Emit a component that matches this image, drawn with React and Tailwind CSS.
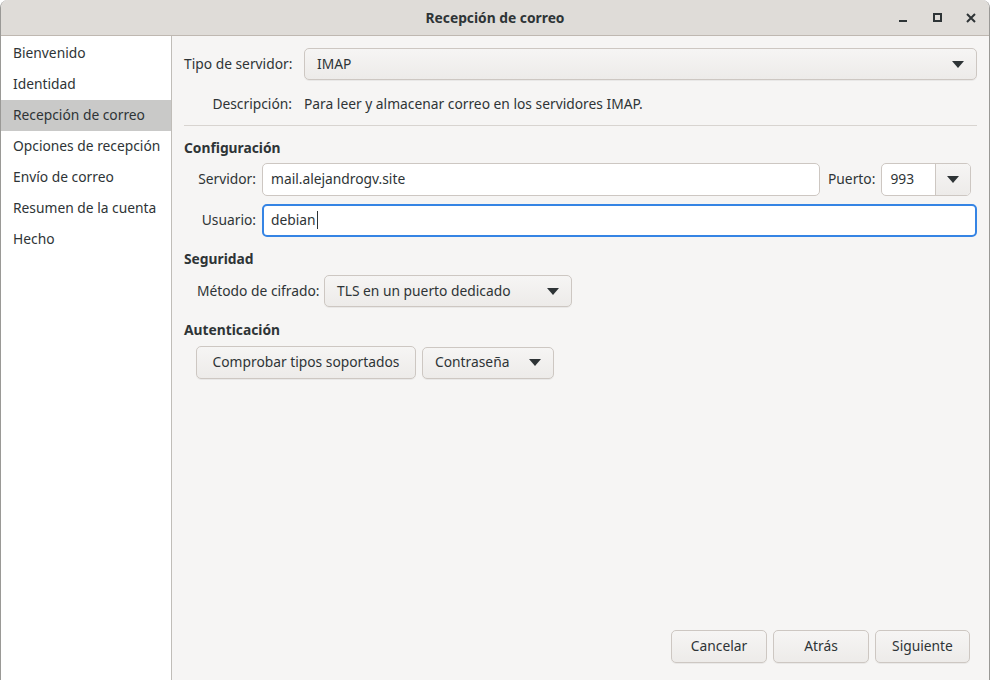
import React from "react";

const font = { fontFamily: '"Noto Sans", "Open Sans", sans-serif' };

function Caret() {
  return (
    <svg width="12" height="7" viewBox="0 0 12 7" className="shrink-0">
      <path d="M0 0 H12 L6 7 Z" fill="#2e3436" />
    </svg>
  );
}

function Combo({ text, className = "" }) {
  return (
    <div className={"flex h-[32px] items-center justify-between rounded-[5px] border border-[#cdc7c2] bg-gradient-to-b from-[#f6f5f4] to-[#edebe9] pl-[12px] pr-[12px] shadow-[0_1px_0_rgba(0,0,0,0.05)] " + className}>
      <span>{text}</span>
      <Caret />
    </div>
  );
}

function Button({ text, className = "" }) {
  return (
    <div className={"flex h-[33px] items-center justify-center rounded-[5px] border border-[#cdc7c2] bg-gradient-to-b from-[#f6f5f4] to-[#edebe9] shadow-[0_1px_0_rgba(0,0,0,0.05)] " + className}>
      {text}
    </div>
  );
}

export default function App() {
  const items = [
    "Bienvenido",
    "Identidad",
    "Recepción de correo",
    "Opciones de recepción",
    "Envío de correo",
    "Resumen de la cuenta",
    "Hecho",
  ];
  return (
    <div style={font} className="flex h-[680px] w-[990px] flex-col overflow-hidden rounded-t-[8px] border-l border-r border-[#9a9996] bg-[#f6f5f4] text-[13.8px] text-[#2e3436]">
      {/* title bar */}
      <div className="relative flex h-[36px] shrink-0 items-center justify-center border-b border-[#bfb8b1] bg-[#dfdcd8] pt-[2px]">
        <span className="font-bold">Recepción de correo</span>
        <div className="absolute right-[1px] top-0 flex h-[35px] items-center">
          <div className="flex h-[24px] w-[34px] items-center justify-center">
            <div className="mt-[6px] h-[2px] w-[8px] bg-[#2e3436]" />
          </div>
          <div className="flex h-[24px] w-[34px] items-center justify-center">
            <div className="h-[9px] w-[9px] border-[2px] border-[#2e3436]" />
          </div>
          <div className="flex h-[24px] w-[34px] items-center justify-center">
            <svg width="10" height="10" viewBox="0 0 10 10">
              <path d="M1 1 L9 9 M9 1 L1 9" stroke="#2e3436" strokeWidth="2" />
            </svg>
          </div>
        </div>
      </div>
      <div className="flex min-h-0 flex-1">
        {/* sidebar */}
        <div className="flex w-[171px] shrink-0 flex-col border-r border-[#c0bdb8] bg-white pt-[2px]">
          {items.map((it, i) => (
            <div
              key={it}
              className={"flex h-[31px] items-center pl-[12px] " + (i === 2 ? "bg-[#c9c9c8]" : "")}
            >
              {it}
            </div>
          ))}
        </div>
        {/* main */}
        <div className="flex flex-1 flex-col pl-[12px] pr-[12px] pt-[12px] pb-[17px]">
          <div className="flex items-center">
            <span className="w-[120px]">Tipo de servidor:</span>
            <Combo text="IMAP" className="flex-1" />
          </div>
          <div className="mt-[9px] flex h-[30px] items-center">
            <span className="w-[120px] pr-[12px] text-right">Descripción:</span>
            <span>Para leer y almacenar correo en los servidores IMAP.</span>
          </div>
          <div className="mt-[6px] h-px bg-[#d8d4d0]" />
          <div className="mt-[12px] font-bold">Configuración</div>
          <div className="mt-[4px] flex items-center">
            <span className="w-[78px] pr-[6px] text-right">Servidor:</span>
            <div className="flex h-[33px] w-[558px] items-center rounded-[5px] border border-[#cdc7c2] bg-white pl-[8px]">
              mail.alejandrogv.site
            </div>
            <span className="ml-[8px] mr-[6px]">Puerto:</span>
            <div className="flex h-[33px] w-[90px] items-stretch overflow-hidden rounded-[5px] border border-[#cdc7c2] bg-white">
              <div className="flex flex-1 items-center pl-[8px]">993</div>
              <div className="flex w-[35px] items-center justify-center border-l border-[#cdc7c2] bg-gradient-to-b from-[#f6f5f4] to-[#edebe9]">
                <Caret />
              </div>
            </div>
          </div>
          <div className="mt-[8px] flex items-center">
            <span className="w-[78px] pr-[6px] text-right">Usuario:</span>
            <div className="flex h-[33px] flex-1 items-center rounded-[5px] border-[2px] border-[#3584e4] bg-white pl-[7px]">
              debian<span className="ml-[1px] inline-block h-[18px] w-px bg-[#2e3436]" />
            </div>
          </div>
          <div className="mt-[12px] font-bold">Seguridad</div>
          <div className="mt-[6px] flex items-center pl-[13px]">
            <span className="w-[127px]">Método de cifrado:</span>
            <Combo text="TLS en un puerto dedicado" className="w-[248px]" />
          </div>
          <div className="mt-[13px] font-bold">Autenticación</div>
          <div className="mt-[5px] flex items-center gap-[6px] pl-[12px]">
            <Button text="Comprobar tipos soportados" className="w-[220px]" />
            <Combo text="Contraseña" className="w-[132px]" />
          </div>
          <div className="flex-1" />
          <div className="flex justify-end gap-[6px] pr-[7px]">
            <Button text="Cancelar" className="w-[96px]" />
            <Button text="Atrás" className="w-[96px]" />
            <Button text="Siguiente" className="w-[95px]" />
          </div>
        </div>
      </div>
    </div>
  );
}
